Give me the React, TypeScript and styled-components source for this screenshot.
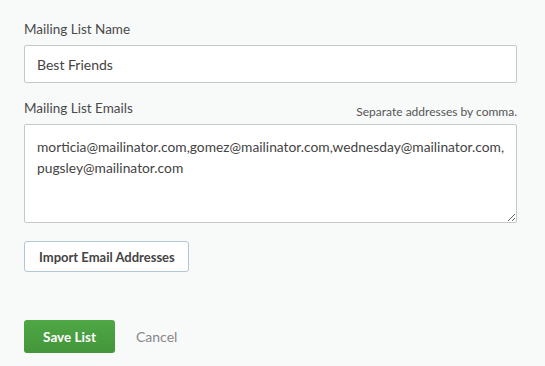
import React from 'react'
import styled, { createGlobalStyle } from 'styled-components'

const GlobalStyle = createGlobalStyle`
  html, body {
    margin: 0;
    padding: 0;
    background-color: #f8f9f9;
  }
  body {
    font-family: Lato, "Open Sans", sans-serif;
    color: #444;
  }
`

const App = () => {
  return (
    <Container>
      <GlobalStyle />
      <Field>
        <LabelRow>
          <Label>Mailing List Name</Label>
        </LabelRow>
        <TextInput type="text" defaultValue="Best Friends" />
      </Field>
      <Field>
        <LabelRow>
          <Label>Mailing List Emails</Label>
          <Hint>Separate addresses by comma.</Hint>
        </LabelRow>
        <TextArea
          defaultValue="morticia@mailinator.com,gomez@mailinator.com,wednesday@mailinator.com,pugsley@mailinator.com"
        />
      </Field>
      <ImportButton>Import Email Addresses</ImportButton>
      <Actions>
        <SaveButton>Save List</SaveButton>
        <CancelLink>Cancel</CancelLink>
      </Actions>
    </Container>
  )
}

export default App

const Container = styled.div`
  width: 493px;
  padding: 19px 24px 14px 24px;
  display: flex;
  flex-direction: column;
`
const Field = styled.div`
  display: flex;
  flex-direction: column;
  margin-bottom: 15px;
`
const LabelRow = styled.div`
  display: flex;
  justify-content: space-between;
  align-items: flex-end;
  height: 18px;
  margin-bottom: 8px;
`
const Label = styled.label`
  font-size: 13.5px;
  color: #4a4a4a;
`
const Hint = styled.span`
  font-size: 12px;
  color: #555;
  margin-bottom: -3px;
`
const TextInput = styled.input`
  box-sizing: border-box;
  width: 100%;
  height: 38px;
  border: 1px solid #c4c8cb;
  border-radius: 2px;
  background-color: #fff;
  padding: 0 12px;
  font-family: Lato, "Open Sans", sans-serif;
  font-size: 14px;
  color: #444;
  outline: none;
`
const TextArea = styled.textarea`
  box-sizing: border-box;
  display: block;
  width: 100%;
  height: 99px;
  border: 1px solid #c4c8cb;
  border-radius: 2px;
  background-color: #fff;
  padding: 11px 9px 10px 12px;
  font-family: Lato, "Open Sans", sans-serif;
  font-size: 13.8px;
  line-height: 21px;
  color: #444;
  outline: none;
  resize: vertical;
`
const ImportButton = styled.button`
  align-self: flex-start;
  height: 31px;
  padding: 0 13px 0 14px;
  border: 1px solid #b3c6d4;
  border-radius: 3px;
  background-color: #fff;
  font-family: Lato, "Open Sans", sans-serif;
  font-size: 13px;
  font-weight: bold;
  color: #444;
  margin-top: 3px;
  margin-bottom: 48px;
`
const Actions = styled.div`
  display: flex;
  align-items: center;
  gap: 21px;
`
const SaveButton = styled.button`
  width: 91px;
  height: 33px;
  border: none;
  border-radius: 3px;
  background: linear-gradient(#4fa745, #43963a);
  color: #fff;
  font-family: Lato, "Open Sans", sans-serif;
  font-size: 13.5px;
  font-weight: bold;
`
const CancelLink = styled.span`
  font-size: 14px;
  color: #888;
`
